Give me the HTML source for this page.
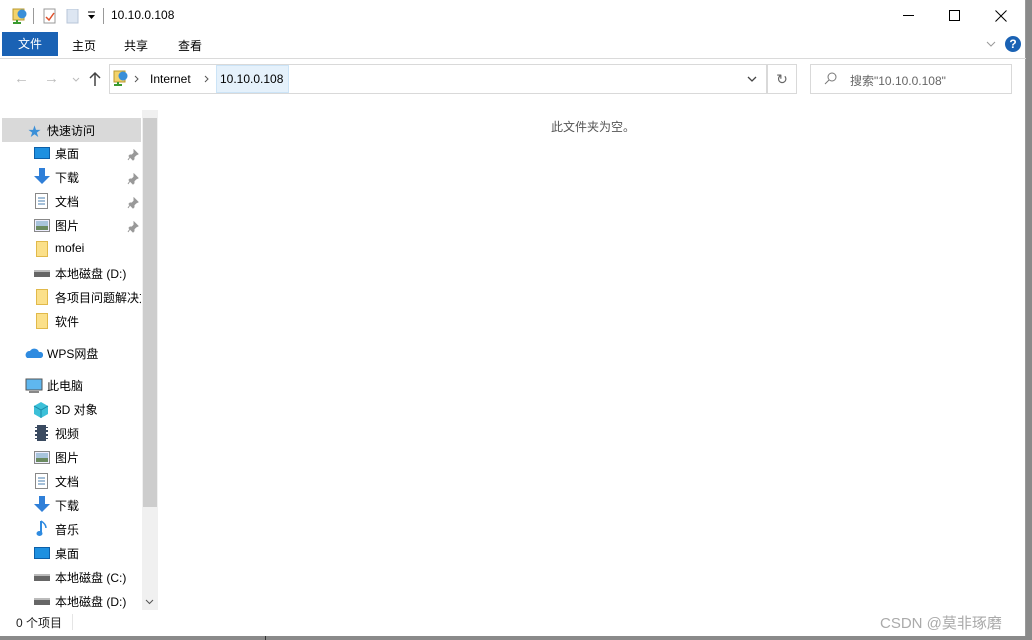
<!DOCTYPE html>
<html><head><meta charset="utf-8"><style>
*{margin:0;padding:0;box-sizing:border-box}
body{width:1032px;height:640px;background:#8a8a8a;font-family:"Liberation Sans","Noto Sans CJK SC",sans-serif;font-size:12px;color:#000;position:relative;overflow:hidden}
.win{position:absolute;left:0;top:0;width:1026px;height:636px;background:#fff;border-right:1px solid #999}
.a{position:absolute;white-space:nowrap}
.ic{position:absolute}
</style></head><body>
<div class="win">
<svg class="ic" style="left:12px;top:8px" width="16" height="16"><rect x="1" y="1" width="11" height="11" fill="#f3d36b" stroke="#b99a2e"/><circle cx="10" cy="6" r="4.5" fill="#3a8fd8"/><rect x="4" y="12" width="2" height="3" fill="#3a9a30"/><rect x="1" y="14" width="8" height="2" fill="#3a9a30"/></svg>
<div class="a" style="left:33px;top:8px;width:1px;height:16px;background:#999"></div>
<svg class="ic" style="left:43px;top:8px" width="14" height="16"><rect x="1" y="1" width="11" height="14" fill="#fff" stroke="#999"/><path d="M3 9l3 3 5-7" stroke="#e0502a" stroke-width="1.5" fill="none"/></svg>
<svg class="ic" style="left:66px;top:9px" width="14" height="16"><rect x="1" y="0" width="11" height="14" fill="#dde6f2" stroke="#b8c6d8"/></svg>
<svg class="ic" style="left:87px;top:11px" width="9" height="10"><path d="M1 1h7" stroke="#000"/><path d="M1 4h7l-3.5 4z" fill="#000"/></svg>
<div class="a" style="left:103px;top:8px;width:1px;height:16px;background:#999"></div>
<div class="a" style="left:111px;top:8px;font-size:12px">10.10.0.108</div>
<div class="a" style="left:903px;top:15px;width:11px;height:1px;background:#000"></div>
<div class="a" style="left:949px;top:10px;width:11px;height:11px;border:1px solid #000"></div>
<svg class="ic" style="left:995px;top:10px" width="12" height="12"><path d="M0.5 0.5l11 11M11.5 0.5l-11 11" stroke="#000"/></svg>
<div class="a" style="left:2px;top:32px;width:56px;height:24px;background:#1a62b4;color:#fff;text-align:center;line-height:24px">文件</div>
<div class="a" style="left:72px;top:37px">主页</div>
<div class="a" style="left:124px;top:37px">共享</div>
<div class="a" style="left:178px;top:37px">查看</div>
<svg class="ic" style="left:986px;top:41px" width="10" height="6"><path d="M1 1l4 4 4-4" stroke="#999" fill="none"/></svg>
<div class="a" style="left:1005px;top:36px;width:16px;height:16px;border-radius:50%;background:#1a62b4;color:#fff;font-weight:bold;text-align:center;line-height:16px;font-size:12px">?</div>
<div class="a" style="left:0;top:58px;width:1026px;height:1px;background:#dadada"></div>
<div class="a" style="left:14px;top:70px;color:#bbb;font-size:15px">←</div>
<div class="a" style="left:44px;top:70px;color:#bbb;font-size:15px">→</div>
<svg class="ic" style="left:72px;top:77px" width="8" height="5"><path d="M1 1l3 3 3-3" stroke="#bbb" fill="none"/></svg>
<svg class="ic" style="left:88px;top:71px" width="14" height="16"><path d="M7 2v13M2 7l5-5 5 5" stroke="#444" stroke-width="1.5" fill="none"/></svg>
<div class="a" style="left:109px;top:64px;width:658px;height:30px;border:1px solid #d9d9d9"></div>
<svg class="ic" style="left:113px;top:70px" width="16" height="16"><rect x="1" y="1" width="11" height="11" fill="#f3d36b" stroke="#b99a2e"/><circle cx="10" cy="6" r="4.5" fill="#3a8fd8"/><rect x="4" y="12" width="2" height="3" fill="#3a9a30"/><rect x="1" y="14" width="8" height="2" fill="#3a9a30"/></svg>
<svg class="ic" style="left:134px;top:75px" width="6" height="8"><path d="M1 1l3 3-3 3" stroke="#555" fill="none"/></svg>
<div class="a" style="left:150px;top:72px">Internet</div>
<svg class="ic" style="left:204px;top:75px" width="6" height="8"><path d="M1 1l3 3-3 3" stroke="#555" fill="none"/></svg>
<div class="a" style="left:216px;top:65px;width:73px;height:28px;background:#e5f1fb;border:1px solid #cce4f7"></div>
<div class="a" style="left:220px;top:72px">10.10.0.108</div>
<svg class="ic" style="left:747px;top:76px" width="10" height="6"><path d="M1 1l4 4 4-4" stroke="#444" fill="none" stroke-width="1.3"/></svg>
<div class="a" style="left:767px;top:64px;width:30px;height:30px;border:1px solid #d9d9d9;color:#666;text-align:center;line-height:28px;font-size:14px">↻</div>
<div class="a" style="left:810px;top:64px;width:202px;height:30px;border:1px solid #d9d9d9"></div>
<svg class="ic" style="left:824px;top:72px" width="13" height="13"><circle cx="8" cy="5" r="4" stroke="#777" fill="none"/><path d="M5 8l-4 4" stroke="#777"/></svg>
<div class="a" style="left:850px;top:72px;color:#666">搜索"10.10.0.108"</div>

<div class="a" style="left:2px;top:118px;width:139px;height:24px;background:#d9d9d9"></div>
<div class="a" style="left:28px;top:121px;color:#3a8fd8;font-size:13px">★</div>
<div class="a" style="left:47px;top:122px">快速访问</div>
<div class="a" style="left:142px;top:110px;width:16px;height:500px;background:#f0f0f0"></div>
<div class="a" style="left:143px;top:118px;width:14px;height:389px;background:#cdcdcd"></div>
<svg class="ic" style="left:145px;top:599px" width="9" height="6"><path d="M1 1l3.5 3.5L8 1" stroke="#555" fill="none"/></svg>

<div class="a" style="left:34px;top:147px;width:16px;height:12px;background:#1e90e0;border:1px solid #0c5fa8"></div>
<div class="a" style="left:55px;top:145px">桌面</div>
<svg class="ic" style="left:34px;top:168px" width="16" height="17"><path d="M5 0h6v8h5l-8 8-8-8h5z" fill="#2f7fd8"/></svg>
<div class="a" style="left:55px;top:169px">下载</div>
<svg class="ic" style="left:35px;top:193px" width="13" height="16"><rect x="0.5" y="0.5" width="12" height="15" fill="#fff" stroke="#888"/><path d="M3 5h7M3 8h7M3 11h7" stroke="#4a7fb0"/></svg>
<div class="a" style="left:55px;top:193px">文档</div>
<svg class="ic" style="left:34px;top:219px" width="16" height="13"><rect x="0.5" y="0.5" width="15" height="12" fill="#eef" stroke="#888"/><rect x="2" y="2" width="12" height="5" fill="#a8c4dc"/><rect x="2" y="7" width="12" height="4" fill="#6a8a60"/></svg>
<div class="a" style="left:55px;top:217px">图片</div>
<svg class="ic" style="left:127px;top:149px" width="12" height="12"><path d="M7 1l4 4-2 1-2 2 0 2-1 1-4-4 1-1h2l2-2z M3 8l-2 3" fill="#999" stroke="#999"/></svg>
<svg class="ic" style="left:127px;top:173px" width="12" height="12"><path d="M7 1l4 4-2 1-2 2 0 2-1 1-4-4 1-1h2l2-2z M3 8l-2 3" fill="#999" stroke="#999"/></svg>
<svg class="ic" style="left:127px;top:197px" width="12" height="12"><path d="M7 1l4 4-2 1-2 2 0 2-1 1-4-4 1-1h2l2-2z M3 8l-2 3" fill="#999" stroke="#999"/></svg>
<svg class="ic" style="left:127px;top:221px" width="12" height="12"><path d="M7 1l4 4-2 1-2 2 0 2-1 1-4-4 1-1h2l2-2z M3 8l-2 3" fill="#999" stroke="#999"/></svg>
<div class="a" style="left:36px;top:241px;width:12px;height:16px;background:#fbe08a;border:1px solid #e1b94a"></div>
<div class="a" style="left:55px;top:241px">mofei</div>
<div class="a" style="left:34px;top:270px;width:16px;height:7px;background:#666;border-top:2px solid #bbb"></div>
<div class="a" style="left:55px;top:265px">本地磁盘 (D:)</div>
<div class="a" style="left:36px;top:289px;width:12px;height:16px;background:#fbe08a;border:1px solid #e1b94a"></div>
<div class="a" style="left:55px;top:289px;width:86px;overflow:hidden">各项目问题解决方案</div>
<div class="a" style="left:36px;top:313px;width:12px;height:16px;background:#fbe08a;border:1px solid #e1b94a"></div>
<div class="a" style="left:55px;top:313px">软件</div>

<svg class="ic" style="left:25px;top:347px" width="18" height="12"><path d="M2 11a4 4 0 0 1 3-7a5 5 0 0 1 9 1a3 3 0 0 1 2 6z" fill="#2f8be0"/></svg>
<div class="a" style="left:47px;top:345px">WPS网盘</div>
<svg class="ic" style="left:25px;top:378px" width="18" height="16"><rect x="1" y="1" width="16" height="11" fill="#5fb7ef" stroke="#555"/><rect x="4" y="13" width="10" height="2" fill="#888"/></svg>
<div class="a" style="left:47px;top:377px">此电脑</div>
<svg class="ic" style="left:33px;top:401px" width="17" height="17"><path d="M8 1l7 4v8l-7 4-7-4V5z" fill="#3cc0d8"/><path d="M1 5l7 4 7-4M8 9v8" stroke="#1a8aa8" fill="none"/></svg>
<div class="a" style="left:55px;top:401px">3D 对象</div>
<div class="a" style="left:35px;top:425px;width:13px;height:16px;background:#3a4a60;border-left:2px dotted #fff;border-right:2px dotted #fff"></div>
<div class="a" style="left:55px;top:425px">视频</div>
<svg class="ic" style="left:34px;top:451px" width="16" height="13"><rect x="0.5" y="0.5" width="15" height="12" fill="#eef" stroke="#888"/><rect x="2" y="2" width="12" height="5" fill="#a8c4dc"/><rect x="2" y="7" width="12" height="4" fill="#6a8a60"/></svg>
<div class="a" style="left:55px;top:449px">图片</div>
<svg class="ic" style="left:35px;top:473px" width="13" height="16"><rect x="0.5" y="0.5" width="12" height="15" fill="#fff" stroke="#888"/><path d="M3 5h7M3 8h7M3 11h7" stroke="#4a7fb0"/></svg>
<div class="a" style="left:55px;top:473px">文档</div>
<svg class="ic" style="left:34px;top:496px" width="16" height="17"><path d="M5 0h6v8h5l-8 8-8-8h5z" fill="#2f7fd8"/></svg>
<div class="a" style="left:55px;top:497px">下载</div>
<svg class="ic" style="left:36px;top:520px" width="12" height="18"><path d="M5 1v12" stroke="#2f8be0" stroke-width="2"/><ellipse cx="3.5" cy="13.5" rx="3" ry="2.5" fill="#2f8be0"/><path d="M5 1q5 3 5 7" stroke="#2f8be0" stroke-width="1.5" fill="none"/></svg>
<div class="a" style="left:55px;top:521px">音乐</div>
<div class="a" style="left:34px;top:547px;width:16px;height:12px;background:#1e90e0;border:1px solid #0c5fa8"></div>
<div class="a" style="left:55px;top:545px">桌面</div>
<div class="a" style="left:34px;top:574px;width:16px;height:7px;background:#666;border-top:2px solid #bbb"></div>
<div class="a" style="left:55px;top:569px">本地磁盘 (C:)</div>
<div class="a" style="left:34px;top:598px;width:16px;height:7px;background:#666;border-top:2px solid #bbb"></div>
<div class="a" style="left:55px;top:593px">本地磁盘 (D:)</div>

<div class="a" style="left:551px;top:118px;color:#555">此文件夹为空。</div>
<div class="a" style="left:16px;top:614px;color:#222">0 个项目</div>
<div class="a" style="left:72px;top:614px;width:1px;height:16px;background:#e5e5e5"></div>
<div class="a" style="left:880px;top:612px;color:#aaa;font-size:15px">CSDN @莫非琢磨</div>
</div>
<div class="a" style="left:265px;top:636px;width:1px;height:4px;background:#333"></div>
</body></html>
